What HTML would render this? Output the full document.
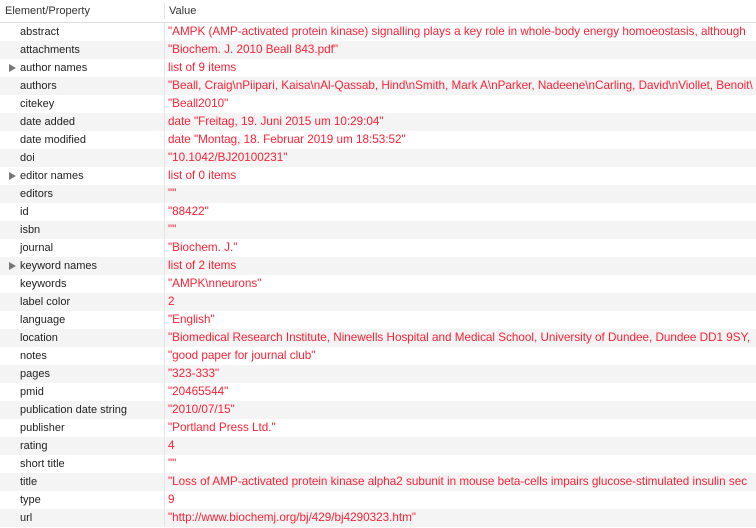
<!DOCTYPE html><html><head><style>
body{margin:0;width:756px;height:528px;overflow:hidden;background:#fff;font-family:"Liberation Sans",sans-serif;font-size:11px}
.h{height:22px;border-bottom:1px solid #dcdcdc;position:relative;color:#333;background:#fff}
.h span{position:absolute;top:5px}
.h i{position:absolute;left:164px;top:3px;width:1px;height:16px;background:#e0e0e0}
.r{height:18px;position:relative;white-space:nowrap}
.k{position:absolute;left:20px;top:0;line-height:18px;color:#222}
.v{position:absolute;left:168px;top:0;line-height:18px;color:#fb2237;font-size:11.7px}
.t{position:absolute;left:9px;top:5px;width:0;height:0;border-top:4px solid transparent;border-bottom:4px solid transparent;border-left:7px solid #777}
.d{position:absolute;left:164px;top:0;width:1px;height:18px;background:#e6e6e6}
#rows .r:nth-child(odd){background:#fff}#rows .r:nth-child(even){background:#f4f4f4}
</style></head><body>
<div class="h"><span style="left:5px">Element/Property</span><i></i><span style="left:169px">Value</span></div>
<div id="rows">
<div class="r"><span class="k">abstract</span><span class="d"></span><span class="v">"AMPK (AMP-activated protein kinase) signalling plays a key role in whole-body energy homoeostasis, although</span></div>
<div class="r"><span class="k">attachments</span><span class="d"></span><span class="v">"Biochem. J. 2010 Beall 843.pdf"</span></div>
<div class="r"><span class="t"></span><span class="k">author names</span><span class="d"></span><span class="v">list of 9 items</span></div>
<div class="r"><span class="k">authors</span><span class="d"></span><span class="v">"Beall, Craig\nPiipari, Kaisa\nAl-Qassab, Hind\nSmith, Mark A\nParker, Nadeene\nCarling, David\nViollet, Benoit\</span></div>
<div class="r"><span class="k">citekey</span><span class="d"></span><span class="v">"Beall2010"</span></div>
<div class="r"><span class="k">date added</span><span class="d"></span><span class="v">date "Freitag, 19. Juni 2015 um 10:29:04"</span></div>
<div class="r"><span class="k">date modified</span><span class="d"></span><span class="v">date "Montag, 18. Februar 2019 um 18:53:52"</span></div>
<div class="r"><span class="k">doi</span><span class="d"></span><span class="v">"10.1042/BJ20100231"</span></div>
<div class="r"><span class="t"></span><span class="k">editor names</span><span class="d"></span><span class="v">list of 0 items</span></div>
<div class="r"><span class="k">editors</span><span class="d"></span><span class="v">""</span></div>
<div class="r"><span class="k">id</span><span class="d"></span><span class="v">"88422"</span></div>
<div class="r"><span class="k">isbn</span><span class="d"></span><span class="v">""</span></div>
<div class="r"><span class="k">journal</span><span class="d"></span><span class="v">"Biochem. J."</span></div>
<div class="r"><span class="t"></span><span class="k">keyword names</span><span class="d"></span><span class="v">list of 2 items</span></div>
<div class="r"><span class="k">keywords</span><span class="d"></span><span class="v">"AMPK\nneurons"</span></div>
<div class="r"><span class="k">label color</span><span class="d"></span><span class="v">2</span></div>
<div class="r"><span class="k">language</span><span class="d"></span><span class="v">"English"</span></div>
<div class="r"><span class="k">location</span><span class="d"></span><span class="v">"Biomedical Research Institute, Ninewells Hospital and Medical School, University of Dundee, Dundee DD1 9SY, </span></div>
<div class="r"><span class="k">notes</span><span class="d"></span><span class="v">"good paper for journal club"</span></div>
<div class="r"><span class="k">pages</span><span class="d"></span><span class="v">"323-333"</span></div>
<div class="r"><span class="k">pmid</span><span class="d"></span><span class="v">"20465544"</span></div>
<div class="r"><span class="k">publication date string</span><span class="d"></span><span class="v">"2010/07/15"</span></div>
<div class="r"><span class="k">publisher</span><span class="d"></span><span class="v">"Portland Press Ltd."</span></div>
<div class="r"><span class="k">rating</span><span class="d"></span><span class="v">4</span></div>
<div class="r"><span class="k">short title</span><span class="d"></span><span class="v">""</span></div>
<div class="r"><span class="k">title</span><span class="d"></span><span class="v">"Loss of AMP-activated protein kinase alpha2 subunit in mouse beta-cells impairs glucose-stimulated insulin sec</span></div>
<div class="r"><span class="k">type</span><span class="d"></span><span class="v">9</span></div>
<div class="r"><span class="k">url</span><span class="d"></span><span class="v">"http://www.biochemj.org/bj/429/bj4290323.htm"</span></div>
</div>
</body></html>
